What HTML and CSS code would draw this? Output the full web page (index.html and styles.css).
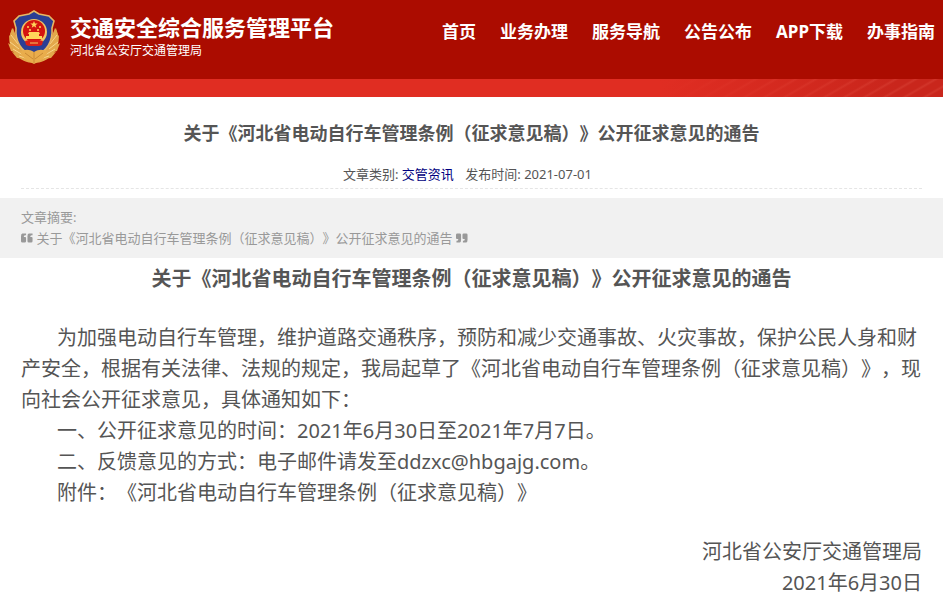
FILE: index.html
```html
<!DOCTYPE html>
<html lang="zh-CN">
<head>
    <meta charset="UTF-8">
    <meta name="viewport" content="width=device-width, initial-scale=1.0">
    <title>交通安全综合服务管理平台</title>
    <link rel="stylesheet" href="styles.css">
</head>
<body>
<header class="header">
    <div class="brand">
        <svg class="emblem" viewBox="0 0 52 56" aria-hidden="true">
            <!-- wreath -->
            <g fill="#e3a84b">
                <path d="M5 18C0 24 0 37 7 44c5 6 12 9 19 9s14-3 19-9c7-7 7-20 2-26l-3 8-8 16H16L8 26z"/>
                <path d="M4 18l5 10-1 6-6-7zM1 25l8 9v5l-7-5zM0 33l9 6 3 5-9-3zM4 42l9 2 5 5-9-1zM48 18l-5 10 1 6 6-7zM51 25l-8 9v5l7-5zM52 33l-9 6-3 5 9-3zM48 42l-9 2-5 5 9-1z"/>
            </g>
            <path d="M3 25l7 9M2 32l9 7M5 39l10 6M11 46l9 3M49 25l-7 9M50 32l-9 7M47 39l-10 6M41 46l-9 3" stroke="#f8d58a" stroke-width="1" fill="none"/>
            <!-- shield -->
            <path d="M26 1l5 3 10 2 5 5-2 7c1 13-4 23-18 29C12 41 7 31 8 18l-2-7 5-5 10-2z" fill="#2b3f94" stroke="#e6b765" stroke-width="1.6"/>
            <circle cx="26" cy="22" r="13" fill="#f1c565"/>
            <circle cx="26" cy="21" r="11" fill="#d4140f"/>
            <path d="M26 11l1 2.500h2.700l-2.200 1.700.8 2.600-2.300-1.600-2.300 1.600.8-2.600-2.200-1.700H25z" fill="#ffd65a"/>
            <g fill="#ffd65a">
                <circle cx="20" cy="17" r="1"/><circle cx="22" cy="20" r="1"/>
                <circle cx="30" cy="20" r="1"/><circle cx="32" cy="17" r="1"/>
                <path d="M21 22h10l1 2h-1v2h3v3H18v-3h3v-2h-1z"/>
            </g>
            <path d="M17 31l4-1h10l4 1-1 4-3 1H21l-3-1z" fill="#d81f16"/>
            <path d="M22 33h8" stroke="#f5c75f"/>
            <path d="M12 42c5-3 9-3 14 0 5-3 9-3 14 0-2 5-7 9-14 12-7-3-12-7-14-12z" fill="#e9ad4c"/>
            <path d="M17 43l8 6M35 43l-8 6M26 42v11" stroke="#c98a35" fill="none"/>
        </svg>
        <div class="brand-text">
            <h1 class="site-name">交通安全综合服务管理平台</h1>
            <p class="site-owner">河北省公安厅交通管理局</p>
        </div>
    </div>
    <nav class="nav">
        <a href="#">首页</a>
        <a href="#">业务办理</a>
        <a href="#">服务导航</a>
        <a href="#">公告公布</a>
        <a href="#">APP下载</a>
        <a href="#">办事指南</a>
    </nav>
</header>
<div class="banner"></div>

<main>
    <div class="article-head">
        <h2 class="article-title">关于《河北省电动自行车管理条例（征求意见稿）》公开征求意见的通告</h2>
        <p class="meta">
            <span>文章类别: <a href="#">交管资讯</a></span>
            <span>发布时间: 2021-07-01</span>
        </p>
    </div>

    <div class="summary">
        <p>文章摘要:</p>
        <p>
            <svg class="quote" viewBox="0 0 26 20" aria-hidden="true"><path d="M3 0h8v4H9Q6 4 6 8h3q2 0 2 2v7q0 3-3 3H3q-3 0-3-3V6q0-6 3-6zM17 0h8v4h-2q-3 0-3 4h3q2 0 2 2v7q0 3-3 3h-5q-3 0-3-3V6q0-6 3-6z"/></svg>
            关于《河北省电动自行车管理条例（征求意见稿）》公开征求意见的通告
            <svg class="quote" viewBox="0 0 26 20" aria-hidden="true"><path d="M8 20H1v-4h1q3 0 3-4H2q-2 0-2-2V3q0-3 3-3h5q3 0 3 3v11q0 6-3 6zM22 20h-7v-4h1q3 0 3-4h-3q-2 0-2-2V3q0-3 3-3h5q3 0 3 3v11q0 6-3 6z"/></svg>
        </p>
    </div>

    <article class="content">
        <h3 class="content-title">关于《河北省电动自行车管理条例（征求意见稿）》公开征求意见的通告</h3>
        <p>为加强电动自行车管理，维护道路交通秩序，预防和减少交通事故、火灾事故，保护公民人身和财产安全，根据有关法律、法规的规定，我局起草了《河北省电动自行车管理条例（征求意见稿）》，现向社会公开征求意见，具体通知如下：</p>
        <p>一、公开征求意见的时间：2021年6月30日至2021年7月7日。</p>
        <p>二、反馈意见的方式：电子邮件请发至ddzxc@hbgajg.com。</p>
        <p>附件：《河北省电动自行车管理条例（征求意见稿）》</p>
        <div class="signature">
            <p>河北省公安厅交通管理局</p>
            <p>2021年6月30日</p>
        </div>
    </article>
</main>
</body>
</html>
```
FILE: styles.css
```css
:root {
    --red: #ab0c00;
    --text: #555;
    --muted: #999;
    --link: #000080;
}

* {
    box-sizing: border-box;
}

body {
    margin: 0;
    background: #fff;
    color: var(--text);
    font-family: "Noto Sans", "Noto Sans CJK SC", sans-serif;
    text-spacing-trim: space-all;
}

h1, h2, h3, p {
    margin: 0;
}

a {
    color: var(--link);
    text-decoration: none;
}

/* Header */
.header {
    display: flex;
    justify-content: space-between;
    align-items: flex-start;
    padding: 10px 8px 13px;
    background: var(--red);
    color: #fff;
}

.brand {
    display: flex;
    gap: 10px;
}

.emblem {
    width: 52px;
    height: 56px;
}

.brand-text {
    padding-top: 3px;
}

.site-name {
    font-size: 22px;
    line-height: 28px;
}

.site-owner {
    font-size: 12px;
    line-height: 20px;
}

.nav {
    display: flex;
    gap: 24px;
    padding-top: 10px;
    font-size: 17px;
    line-height: 24px;
    font-weight: bold;
    white-space: nowrap;
}

.nav a {
    color: #fff;
}

.banner {
    height: 18px;
    background:
        linear-gradient(90deg, #e02d22 70%, transparent 95%),
        repeating-linear-gradient(150deg, #c9261c 0 6px, #d1352a 8px, #c9261c 10px);
}

/* Article heading */
.article-head {
    margin: 0 21px;
    padding: 22px 0 3px;
    border-bottom: 1px dashed #e5e5e5;
    text-align: center;
}

.article-title {
    font-size: 18px;
    line-height: 28px;
}

.meta {
    padding-top: 16px;
    font-size: 13px;
    line-height: 22px;
}

.meta span {
    margin-right: 8px;
}

/* Summary */
.summary {
    margin-top: 9px;
    padding: 9px 21px;
    background: #f1f1f1;
    color: var(--muted);
    font-size: 13px;
    line-height: 21px;
}

.quote {
    width: 12px;
    height: 10px;
    fill: currentColor;
}

/* Body text */
.content {
    padding: 5px 21px 0;
    font-size: 20px;
    line-height: 31px;
}

.content-title {
    margin-bottom: 28px;
    font-size: 20px;
    text-align: center;
}

.content p {
    text-indent: 36px;
}

.signature {
    margin-top: 28px;
    text-align: right;
}
```
